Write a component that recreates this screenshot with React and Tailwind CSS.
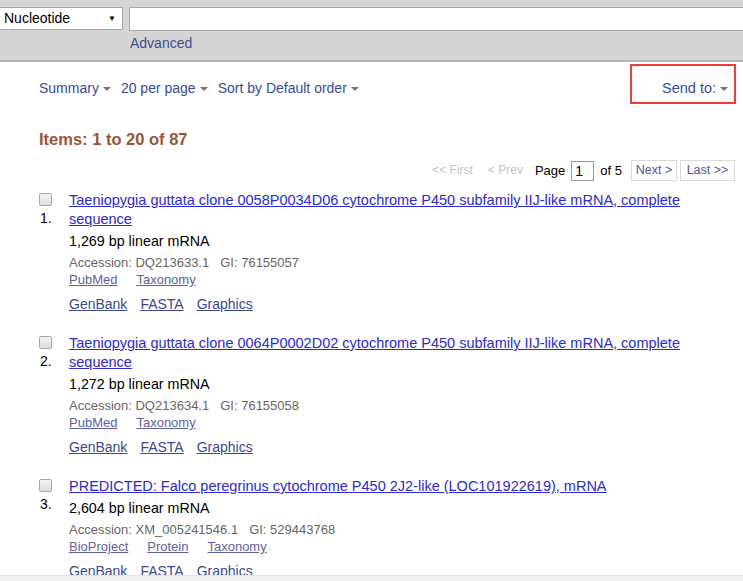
const Caret = () => (
  <span className="ml-[4px] inline-block w-0 h-0 border-l-[4px] border-r-[4px] border-t-[4px] border-l-transparent border-r-transparent border-t-[#777] align-middle" />
);

const items = [
  {
    n: 1,
    title:
      "Taeniopygia guttata clone 0058P0034D06 cytochrome P450 subfamily IIJ-like mRNA, complete sequence",
    size: "1,269 bp linear mRNA",
    acc: "DQ213633.1",
    gi: "76155057",
    links: ["PubMed", "Taxonomy"],
  },
  {
    n: 2,
    title:
      "Taeniopygia guttata clone 0064P0002D02 cytochrome P450 subfamily IIJ-like mRNA, complete sequence",
    size: "1,272 bp linear mRNA",
    acc: "DQ213634.1",
    gi: "76155058",
    links: ["PubMed", "Taxonomy"],
  },
  {
    n: 3,
    title: "PREDICTED: Falco peregrinus cytochrome P450 2J2-like (LOC101922619), mRNA",
    size: "2,604 bp linear mRNA",
    acc: "XM_005241546.1",
    gi: "529443768",
    links: ["BioProject", "Protein", "Taxonomy"],
  },
];

const Item = ({ item }) => (
  <div className="flex pl-[39px] mb-[21px]">
    <div className="w-[30px] shrink-0 flex flex-col">
      <span className="mt-[2px] w-[13px] h-[13px] rounded-[2px] border border-[#a8a8a8] bg-gradient-to-b from-[#f4f4f4] to-[#dedede]" />
      <span className="mt-[3px] ml-[1px] text-[14px] leading-[19px] text-black">{item.n}.</span>
    </div>
    <div className="w-[630px]">
      <a href="#" className="block text-[14.5px] leading-[19px] text-[#2b2bcf] underline">
        {item.title}
      </a>
      <div className="text-[14.3px] leading-[22px] pt-[1px] text-black">{item.size}</div>
      <div className="text-[13px] leading-[21px] text-[#666]">
        Accession: {item.acc}
        <span className="ml-[11px]">GI: {item.gi}</span>
      </div>
      <div className="flex gap-[19px] text-[13px] leading-[15px] -mt-[1px] text-[#5f6199]">
        {item.links.map((l) => (
          <a key={l} href="#" className="underline">
            {l}
          </a>
        ))}
      </div>
      <div className="mt-[8px] flex gap-[13px] text-[14px] leading-[18px] text-[#3b4a8c]">
        <a href="#" className="underline">GenBank</a>
        <a href="#" className="underline">FASTA</a>
        <a href="#" className="underline">Graphics</a>
      </div>
    </div>
  </div>
);

export default function App() {
  return (
    <div className="w-[743px] h-[581px] overflow-hidden flex flex-col bg-white font-['Liberation_Sans',Arial,sans-serif]">
      <div className="h-[62px] shrink-0 bg-[#d5d5d5] border-b-2 border-[#b4b4b4] pt-[7px]">
        <div className="flex gap-[6px]">
          <div className="w-[123px] h-[23px] bg-white border border-[#a9a9a9] border-l-0 flex items-center justify-between pl-[4px] pr-[6px]">
            <span className="text-[14px] text-black">Nucleotide</span>
            <span className="text-[8px] text-black">▼</span>
          </div>
          <div className="flex-1 h-[24px] bg-white border border-[#a9a9a9] border-r-0" />
        </div>
        <div className="pl-[130px] mt-[4px] text-[14px] leading-[16px] text-[#3d4f91]">Advanced</div>
      </div>

      <div className="flex-1 overflow-hidden">
        <div className="flex items-start justify-between pl-[39px] pr-[7px] pt-[2px]">
          <div className="flex gap-[10px] mt-[15px] text-[14px] leading-[18px] text-[#3a4c92]">
            <span>Summary<Caret /></span>
            <span>20 per page<Caret /></span>
            <span>Sort by Default order<Caret /></span>
          </div>
          <div className="w-[106px] h-[40px] border-2 border-[#f23a3a] flex items-end justify-end pr-[6px] pb-[5px] text-[14.5px] leading-[18px] text-[#3a4c92]">
            <span>Send to:<Caret /></span>
          </div>
        </div>

        <div className="pl-[39px] mt-[26px] text-[16.5px] leading-[18px] font-bold text-[#985735]">
          Items: 1 to 20 of 87
        </div>

        <div className="flex justify-end items-center pr-[8px] mt-[12px] mb-[10px] text-[12.5px] leading-[15px]">
          <span className="text-[#c4c4c4] text-[12px] mr-[15px]">&lt;&lt; First</span>
          <span className="text-[#c4c4c4] text-[12px] mr-[12px]">&lt; Prev</span>
          <span className="text-black text-[13px] mr-[6px]">Page</span>
          <span className="w-[23px] h-[20px] border border-[#999] pl-[3px] text-black text-[14px] leading-[18px] mr-[6px]">1</span>
          <span className="text-black text-[13px] mr-[9px]">of 5</span>
          <span className="w-[46px] h-[21px] border border-[#dadada] justify-center flex items-center text-[#4b5a98] mr-[3px]">Next &gt;</span>
          <span className="w-[55px] h-[21px] border border-[#dadada] justify-center flex items-center text-[#4b5a98]">Last &gt;&gt;</span>
        </div>

        {items.map((it) => (
          <Item key={it.n} item={it} />
        ))}
      </div>

      <div className="h-[6px] shrink-0 bg-[#f1f1f1] border-t border-[#e3e3e3]" />
    </div>
  );
}
